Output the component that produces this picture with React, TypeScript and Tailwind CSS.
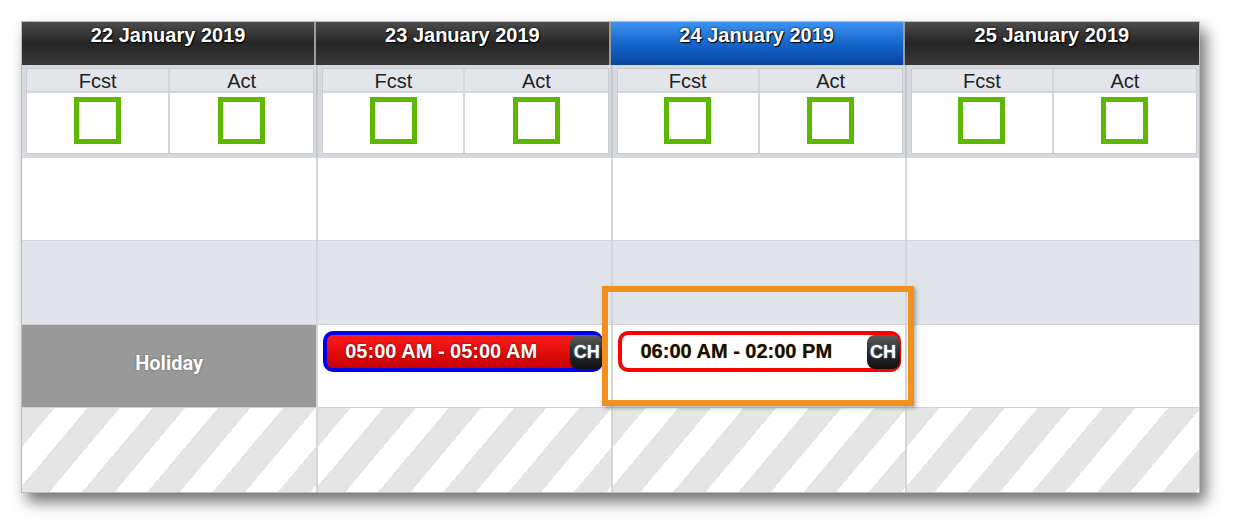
import React from 'react';

const days = [
    { label: '22 January 2019', today: false },
    { label: '23 January 2019', today: false },
    { label: '24 January 2019', today: true },
    { label: '25 January 2019', today: false },
];

const font = { fontFamily: '"Liberation Sans", Arial, sans-serif' };

function Badge() {
    return (
        <div className="flex h-[34px] w-[33px] shrink-0 items-center justify-center rounded-[8px] bg-gradient-to-b from-[#5e5e5e] via-[#2a2a2a] to-[#111] text-[18px] leading-none font-bold text-white [text-shadow:0_0_2px_#7ab8ff]">
            CH
        </div>
    );
}

function Square() {
    return <div className="h-[47px] w-[47px] border-[5px] border-[#5cb800]" />;
}

export default function App() {
    return (
        <div className="min-h-screen bg-white pt-[21px] pl-[21px]" style={font}>
            <div className="relative w-[1179px] border border-[#bdbdbd] bg-white shadow-[6px_9px_14px_rgba(0,0,0,0.55)]">
                {/* Header */}
                <div className="grid h-[43px] grid-cols-4">
                    {days.map((d, i) => (
                        <div
                            key={d.label}
                            className={`flex justify-center pt-[1px] text-[20px] leading-[24px] font-bold text-white [text-shadow:1px_1px_1px_#000,0_0_2px_#000] ${
                                i < 3 ? 'border-r-2 border-[#9c9c9c]' : ''
                            } ${
                                d.today
                                    ? 'bg-gradient-to-b from-[#3d92f0] via-[#1766cc] to-[#0743a0]'
                                    : 'bg-gradient-to-b from-[#4c4c4c] via-[#262626] to-[#3a3a3a]'
                            }`}
                        >
                            {d.label}
                        </div>
                    ))}
                </div>

                {/* Fcst / Act */}
                <div className="grid h-[93px] grid-cols-4 bg-[#d6d9dd]">
                    {days.map((d, i) => (
                        <div key={d.label} className={`pt-[3px] pr-[2px] pb-[4px] pl-[4px] ${i > 0 ? 'border-l-2 border-[#c4c7cb]' : ''}`}>
                            <div className="grid h-full grid-cols-2 border border-[#c9ccd0] bg-white">
                                {['Fcst', 'Act'].map((t, j) => (
                                    <div key={t} className={`flex flex-col ${j === 0 ? 'border-r-2 border-[#d4d6da]' : ''}`}>
                                        <div className="h-[24px] border-b-2 border-[#d4d6da] bg-[#e2e5ea] text-center text-[20px] leading-[24px] text-[#222]">
                                            {t}
                                        </div>
                                        <div className="flex flex-1 justify-center pt-[4px]">
                                            <Square />
                                        </div>
                                    </div>
                                ))}
                            </div>
                        </div>
                    ))}
                </div>

                {/* Empty white row */}
                <div className="grid h-[83px] grid-cols-4 border-b border-[#d0d3d7]">
                    {days.map((d, i) => (
                        <div key={d.label} className={i > 0 ? 'border-l-2 border-[#d6d6d6]' : ''} />
                    ))}
                </div>

                {/* Grey row */}
                <div className="grid h-[84px] grid-cols-4 border-b border-[#cfd2d6] bg-[#e1e4e9]">
                    {days.map((d, i) => (
                        <div key={d.label} className={i > 0 ? 'border-l-2 border-[#d2d5d9]' : ''} />
                    ))}
                </div>

                {/* Shift row */}
                <div className="grid h-[83px] grid-cols-4 border-b border-[#d0d3d7]">
                    <div
                        className="flex items-center justify-center bg-[#999] pb-[6px] text-[20px] font-bold text-white [text-shadow:0_0_2px_#555]"
                        style={{ fontFamily: 'Roboto, "Liberation Sans", sans-serif' }}
                    >
                        Holiday
                    </div>
                    <div className="border-l-2 border-[#d6d6d6] pt-[6px] pl-[5px]">
                        <div className="flex h-[41px] w-[280px] items-center justify-between rounded-[10px] border-[4px] border-[#0000ee] bg-gradient-to-b from-[#ff1a1a] to-[#c80000] pl-[18px]">
                            <span className="-mt-[2px] text-[20px] leading-none font-bold text-white [text-shadow:0_0_2px_#600]">05:00 AM - 05:00 AM</span>
                            <div className="-mr-[4px]">
                                <Badge />
                            </div>
                        </div>
                    </div>
                    <div className="border-l-2 border-[#d6d6d6] pt-[6px] pl-[5px]">
                        <div className="flex h-[41px] w-[283px] items-center justify-between rounded-[10px] border-[4px] border-[#ff0000] bg-white pl-[19px]">
                            <span className="-mt-[2px] text-[20px] leading-none font-bold text-[#111] [text-shadow:0_0_1px_#c87800]">06:00 AM - 02:00 PM</span>
                            <div className="-mr-[3px]">
                                <Badge />
                            </div>
                        </div>
                    </div>
                    <div className="border-l-2 border-[#d6d6d6]" />
                </div>

                {/* Striped row */}
                <div className="grid h-[84px] grid-cols-4">
                    {days.map((d, i) => (
                        <div
                            key={d.label}
                            className={`bg-[repeating-linear-gradient(130deg,#e5e5e5_0px,#e5e5e5_25px,#ffffff_25px,#ffffff_50px)] ${
                                i > 0 ? 'border-l-2 border-[#d6d6d6]' : ''
                            }`}
                        />
                    ))}
                </div>

                {/* Highlight */}
                <div className="absolute top-[264px] left-[580px] h-[120px] w-[312px] border-[6px] border-[#f0901e] shadow-[2px_2px_4px_rgba(0,0,0,0.3)]" />
            </div>
        </div>
    );
}
